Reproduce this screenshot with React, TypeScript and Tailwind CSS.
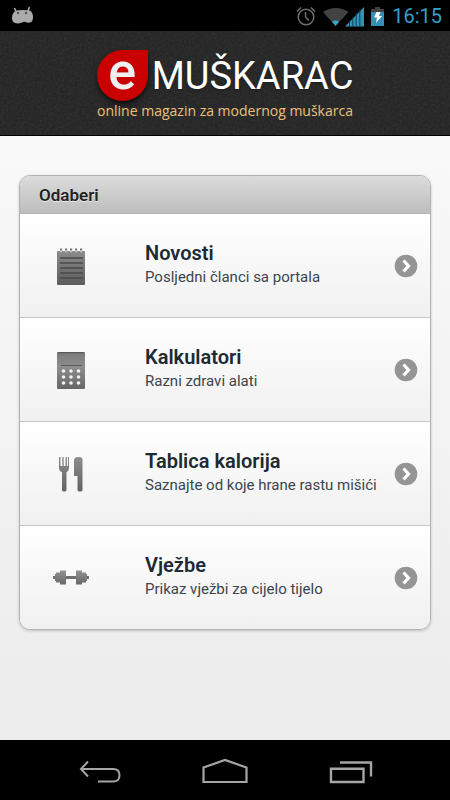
import React from "react";

const rows = [
  { title: "Novosti", text: "Posljedni članci sa portala", icon: <NotepadIcon /> },
  { title: "Kalkulatori", text: "Razni zdravi alati", icon: <CalculatorIcon /> },
  { title: "Tablica kalorija", text: "Saznajte od koje hrane rastu mišići", icon: <CutleryIcon /> },
  { title: "Vježbe", text: "Prikaz vježbi za cijelo tijelo", icon: <DumbbellIcon /> },
];

function NotepadIcon() {
  return (
    <svg width="36" height="40" viewBox="0 0 36 40" aria-hidden="true">
      <defs>
        <linearGradient id="pad" x1="0" y1="0" x2="0" y2="1">
          <stop offset="0" stopColor="#8b8b8b" />
          <stop offset="1" stopColor="#5c5c5c" />
        </linearGradient>
      </defs>
      <path d="M5 5h26q1 0 1 1v32q0 1-1 1H5q-1 0-1-1V6q0-1 1-1z" fill="url(#pad)" />
      <path d="M7 5.5h24" stroke="#c8c8c8" strokeWidth="1.5" strokeDasharray="2.2 2.8" />
      <path d="M7 3.500h24" stroke="#777" strokeWidth="2" strokeDasharray="2.2 2.8" />
      <path d="M7 12h23M7 17h23M7 22h23M7 27h23M7 32h23" stroke="#4a4a4a" strokeWidth="1.3" />
    </svg>
  );
}

function CalculatorIcon() {
  return (
    <svg width="36" height="40" viewBox="0 0 36 40" aria-hidden="true">
      <defs>
        <linearGradient id="calc" x1="0" y1="0" x2="0" y2="1">
          <stop offset="0" stopColor="#7a7a7a" />
          <stop offset="0.4" stopColor="#8e8e8e" />
          <stop offset="1" stopColor="#666" />
        </linearGradient>
      </defs>
      <rect x="4" y="2" width="28" height="37" rx="1" fill="url(#calc)" />
      <path d="M5 2.7h26M8 15.5h21" stroke="#5a5a5a" strokeWidth="1.2" />
      <g fill="#f2f2f2">
        {[21, 27, 33].map((y) => [10.5, 18, 25.5].map((x) => <circle key={x + "-" + y} cx={x} cy={y} r="1.800" />))}
      </g>
    </svg>
  );
}

function CutleryIcon() {
  return (
    <svg width="36" height="40" viewBox="0 0 36 40" aria-hidden="true">
      <defs>
        <linearGradient id="cut" x1="0" y1="0" x2="0" y2="1">
          <stop offset="0" stopColor="#8d8d8d" />
          <stop offset="1" stopColor="#626262" />
        </linearGradient>
      </defs>
      <path d="M6 3h1.500v9h1.800V3h1.400v9h1.800V3h1.400v9h1V3H16v11q0 3-2.500 4v18q0 1.500-2.300 1.500T9 36V18q-3-1-3-4z" fill="url(#cut)" />
      <path d="M21 6q0-3 4.500-3t4 3v30q0 1.500-2.500 1.500T24.500 36V22H21z" fill="url(#cut)" />
    </svg>
  );
}

function DumbbellIcon() {
  return (
    <svg width="36" height="40" viewBox="0 0 36 40" aria-hidden="true">
      <defs>
        <linearGradient id="bell" x1="0" y1="0" x2="0" y2="1">
          <stop offset="0" stopColor="#929292" />
          <stop offset="1" stopColor="#686868" />
        </linearGradient>
      </defs>
      <path d="M0 18h2v3H0zM34 18h2v3h-2zM13 18h10v3H13z" fill="#6f6f6f" />
      <path d="M2 16h1v-1.500h4v-2h6v14H7v-2H3V23H2zM34 16h-1v-1.500h-4v-2h-6v14h6v-2h4V23h1z" fill="url(#bell)" />
    </svg>
  );
}

function StatusBar() {
  return (
    <div className="flex h-[31px] items-center justify-between bg-black pr-2 pl-3">
      <svg width="22" height="18" viewBox="0 0 22 18" role="img" aria-label="Android">
        <path d="M2.500 1l2 5M17.500 0l-2 5" stroke="#aaa" strokeWidth="1.500" />
        <path d="M4 3.500q7-1 14 0 3 2 3 6.500 0 5-3 5.500-3 .5-5-.7-2 0-3 .7-4 1.500-7 .5Q0 15 0 10.500 0 6 4 3.500z" fill="#aaa" />
        <circle cx="6" cy="6" r="0.900" fill="#222" />
        <circle cx="14" cy="6" r="0.900" fill="#222" />
      </svg>
      <div className="flex items-center">
        <svg width="88" height="22" viewBox="0 0 88 22" role="img" aria-label="Alarm, Wi-Fi, signal, battery">
          <g fill="none" stroke="#707070" strokeWidth="1.500">
            <circle cx="10" cy="12" r="7.800" />
            <path d="M9.500 7v5l3.500 3.500M1 6.500l4-4M19 6.500l-4-4" />
          </g>
          <path d="M27 7Q40-1 52.500 7L39.500 21z" fill="#424242" />
          <path d="M36 16.500q3.500-2 7 0L39.500 21z" fill="#33a5cf" />
          <path d="M49 21.500L68 2v19.500z" fill="#338fb7" />
          <path d="M53.500 16v6M56.800 12v10M60.200 8v14M63.800 4v18" stroke="#10394b" strokeWidth="0.900" />
          <path d="M79 2h5v2h4v4H75V4h4z" fill="#414141" />
          <path d="M75 7h13v14H75z" fill="#338fb7" />
          <path d="M80.500 7h4l-1.500 4h3l-6 7 1-5.500h-3z" fill="#fff" />
        </svg>
        <time className="ml-2 font-['Roboto',sans-serif] text-[20px] leading-6 text-[#33a0ca]">16:15</time>
      </div>
    </div>
  );
}

function Brand() {
  return (
    <header className="relative h-[105px] overflow-hidden border-b border-black bg-[#222]">
      <svg className="absolute inset-0 h-full w-full opacity-10" aria-hidden="true">
        <filter id="grain">
          <feTurbulence type="fractalNoise" baseFrequency="0.45" numOctaves="2" />
          <feColorMatrix type="saturate" values="0" />
        </filter>
        <rect width="100%" height="100%" filter="url(#grain)" />
      </svg>
      <div className="relative flex flex-col items-center pt-[19px]">
        <h1 className="flex items-start gap-1 text-white">
          <span className="flex size-[51px] shrink-0 items-center justify-center rounded-full rounded-tr-none bg-[#ca0000] pb-2 font-['Roboto',sans-serif] text-[52px] leading-[44px] font-medium text-[#f0f0f0] shadow-md shadow-black/60">
            e
          </span>
          <span className="font-['Roboto',sans-serif] text-[38px] leading-[52px] text-shadow-md">MUŠKARAC</span>
        </h1>
        <p className="font-['Open_Sans',sans-serif] text-[14px] leading-[18px] whitespace-nowrap text-[#e9c17c]">online magazin za modernog muškarca</p>
      </div>
    </header>
  );
}

function NavigationBar() {
  const button = "flex h-[60px] items-center justify-center";
  return (
    <nav className="flex h-[60px] items-center justify-center gap-[69px] bg-black" aria-label="System">
      <button className={button} aria-label="Back">
        <svg width="56" height="32" viewBox="0 0 56 32" fill="none" stroke="#a5a5a5" strokeWidth="2">
          <path d="M16 7.500l-7 7.500 7 7.500M9 15h32q6.500 0 6.500 6.300t-6.500 6.200H26" />
        </svg>
      </button>
      <button className={button} aria-label="Home">
        <svg width="56" height="32" viewBox="0 0 56 32" fill="none" stroke="#a5a5a5" strokeWidth="2.200">
          <path d="M6.500 13.500L28 6 49.500 13.500V28h-43z" />
        </svg>
      </button>
      <button className={button} aria-label="Recent apps">
        <svg width="56" height="32" viewBox="0 0 56 32" fill="none" stroke="#a5a5a5" strokeWidth="2.400">
          <path d="M9 14.800h32.500V28H9zM18 8.500h31v14" />
        </svg>
      </button>
    </nav>
  );
}

export default function App() {
  return (
    <div className="flex min-h-screen flex-col font-['Roboto',sans-serif]">
      <StatusBar />
      <Brand />
      <main className="flex-1 bg-linear-to-b from-[#f9f9f9] to-[#ececec] px-[19px] pt-[39px] pb-8">
        <section className="overflow-hidden rounded-[11px] border border-[#b3b3b3] shadow-[0_1px_3px_rgba(0,0,0,0.2)]">
          <h2 className="h-[38px] border-b border-[#b5b5b5] bg-linear-to-b from-[#dcdcdc] to-[#bdbdbd] px-[19px] text-[17px] leading-[38px] font-semibold text-[#222] text-shadow-[0_1px_0_#eee]">
            Odaberi
          </h2>
          <ul>
            {rows.map((row) => (
              <li key={row.title} className="border-b border-[#c8c8c8] last:border-b-0">
                <a href="#" className="flex h-[103px] items-center bg-linear-to-b from-white to-[#f0f0f0] pr-3 pl-[33px]">
                  <span className="w-[92px] shrink-0">{row.icon}</span>
                  <span className="flex-1 pb-0.5 whitespace-nowrap">
                    <strong className="block text-[20px] leading-6 font-semibold text-[#1c2a33]">{row.title}</strong>
                    <span className="block text-[15px] leading-6 text-[#3b454c]">{row.text}</span>
                  </span>
                  <svg width="24" height="24" viewBox="0 0 24 24" className="shrink-0" aria-hidden="true">
                    <circle cx="12" cy="12" r="11.300" fill="#959595" />
                    <path d="M9.500 6.500l5 5.500-5 5.500" fill="none" stroke="#fff" strokeWidth="3.200" />
                  </svg>
                </a>
              </li>
            ))}
          </ul>
        </section>
      </main>
      <NavigationBar />
    </div>
  );
}
